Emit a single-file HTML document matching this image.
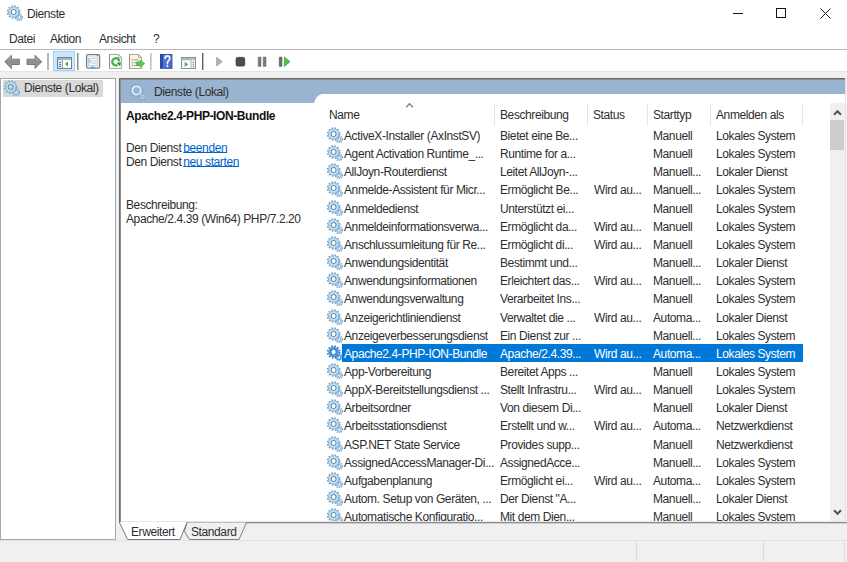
<!DOCTYPE html>
<html><head><meta charset="utf-8">
<style>
*{margin:0;padding:0;box-sizing:border-box}
html,body{width:847px;height:562px;overflow:hidden;background:#fff}
body{position:relative;font-family:"Liberation Sans",sans-serif;font-size:12px;color:#2e2e2e;letter-spacing:-0.4px}
.a{position:absolute;white-space:nowrap}
.t{position:absolute;white-space:nowrap;line-height:14px}
.r{position:absolute;left:0;width:847px;height:18px;line-height:18px;white-space:nowrap}
.r div{position:absolute;top:1px}
.r svg{position:absolute;left:327px;top:1px}
.sel{color:#fff}
</style></head><body>
<svg width="0" height="0" style="position:absolute">
<defs>
<symbol id="gear" viewBox="0 0 16 16">
<circle cx="12" cy="12.3" r="3.2" fill="none" stroke="#6e95bd" stroke-width="1.6" stroke-dasharray="1.05 1.0"/>
<circle cx="12" cy="12.3" r="2.0" fill="#dce9f3" stroke="#a3c6e0" stroke-width="1.5"/>
<circle cx="6.6" cy="7" r="5.95" fill="none" stroke="#77a2cb" stroke-width="1.8" stroke-dasharray="1.55 1.57"/>
<circle cx="6.6" cy="7" r="4.0" fill="none" stroke="#bde3f6" stroke-width="2.9"/>
<circle cx="6.6" cy="7" r="5.2" fill="none" stroke="#86b1d7" stroke-width="0.9"/>
<circle cx="6.6" cy="7" r="2.55" fill="none" stroke="#587b9c" stroke-width="1.0"/>
</symbol>
<symbol id="gearsel" viewBox="0 0 16 16">
<circle cx="11.9" cy="12.2" r="3.1" fill="none" stroke="#2f7fd0" stroke-width="1.5" stroke-dasharray="1.05 1.0"/>
<circle cx="11.9" cy="12.2" r="2.0" fill="none" stroke="#5aa0e0" stroke-width="1.6"/>
<circle cx="6.6" cy="7" r="6.0" fill="none" stroke="#2b7fd3" stroke-width="1.7" stroke-dasharray="1.55 1.59"/>
<circle cx="6.6" cy="7" r="4.0" fill="none" stroke="#4a98e0" stroke-width="2.8"/>
<circle cx="6.6" cy="7" r="2.6" fill="#fff" stroke="#1f6fc0" stroke-width="0.9"/>
</symbol>
</defs>
</svg>

<!-- title bar -->
<svg class="a" style="left:7px;top:5px" width="16" height="16"><use href="#gear"/></svg>
<div class="t" style="left:27px;top:7px">Dienste</div>
<div class="a" style="left:733px;top:13px;width:10px;height:1px;background:#111"></div>
<div class="a" style="left:776px;top:8px;width:10px;height:10px;border:1px solid #111"></div>
<svg class="a" style="left:820px;top:8px" width="11" height="11"><path d="M0.5 0.5L10.5 10.5M10.5 0.5L0.5 10.5" stroke="#222" stroke-width="1"/></svg>

<!-- menu -->
<div class="t" style="left:9px;top:32px">Datei</div>
<div class="t" style="left:50px;top:32px">Aktion</div>
<div class="t" style="left:99px;top:32px">Ansicht</div>
<div class="t" style="left:153px;top:32px">?</div>
<div class="a" style="left:0;top:49px;width:847px;height:1px;background:#b9b9b9"></div>

<!-- toolbar -->
<div class="a" style="left:0;top:71px;width:847px;height:1px;background:#e3e3e3"></div>
<div class="a" style="left:0;top:72px;width:847px;height:490px;background:#f0f0f0"></div>

<svg class="a" style="left:0;top:50px" width="300" height="21">
<defs>
<linearGradient id="arr" x1="0" y1="0" x2="0" y2="1"><stop offset="0" stop-color="#b4b4b4"/><stop offset="0.5" stop-color="#8c8c8c"/><stop offset="1" stop-color="#a8a8a8"/></linearGradient>
<linearGradient id="hlp2" x1="0" y1="0" x2="1" y2="1"><stop offset="0" stop-color="#5b80dc"/><stop offset="1" stop-color="#3f62c8"/></linearGradient>
<linearGradient id="hlp" x1="0" y1="0" x2="1" y2="0"><stop offset="0" stop-color="#2a44a0"/><stop offset="0.35" stop-color="#3555b8"/><stop offset="0.4" stop-color="#5b80d8"/><stop offset="1" stop-color="#4a6fd0"/></linearGradient>
</defs>
<!-- back -->
<path d="M4.8 11.7 L11.4 5.3 L11.4 9.2 L19.3 9.2 L19.3 14.5 L11.4 14.5 L11.4 18.5 Z" fill="url(#arr)" stroke="#6e6e6e" stroke-width="0.9" stroke-linejoin="round"/>
<!-- forward -->
<path d="M41.7 11.7 L35 5.3 L35 9.2 L27 9.2 L27 14.5 L35 14.5 L35 18.5 Z" fill="url(#arr)" stroke="#6e6e6e" stroke-width="0.9" stroke-linejoin="round"/>
<rect x="47" y="3" width="2" height="17" fill="#b8b8b8"/>
<!-- highlighted button -->
<rect x="53.5" y="1.5" width="21" height="19" fill="#cce8ff" stroke="#99d1ff" stroke-width="1"/>
<rect x="57.5" y="7.5" width="14" height="11" fill="#fff" stroke="#7a7f85" stroke-width="1"/>
<rect x="58" y="8" width="13" height="2" fill="#a9b2bb"/>
<rect x="58" y="10" width="4" height="8" fill="#dde6ef"/>
<rect x="62" y="10" width="1" height="8" fill="#9aa4ae"/>
<rect x="59" y="12" width="2" height="1" fill="#4d7fc0"/><rect x="59" y="14" width="2" height="1" fill="#4d7fc0"/><rect x="59" y="16" width="2" height="1" fill="#4d7fc0"/>
<path d="M65 14 L68 11.5 L68 16.5 Z" fill="#3fae3a"/>
<rect x="77" y="3" width="1.5" height="17" fill="#8a8a8a"/>
<!-- properties -->
<rect x="86.6" y="4.6" width="13" height="13.6" rx="1.4" fill="#fbfcfd" stroke="#7c7c7c" stroke-width="1.3"/>
<rect x="87.5" y="5.5" width="11.2" height="1.4" fill="#e3e6ea"/>
<rect x="96.8" y="5" width="1.3" height="1.2" fill="#6a7a90"/>
<rect x="88.3" y="8.2" width="9" height="7.6" fill="#f4f6f8" stroke="#b4bcc8" stroke-width="0.7"/>
<rect x="88.8" y="9.4" width="2.1" height="3.6" fill="#8fdcf8"/>
<rect x="91.8" y="10.6" width="4.6" height="0.9" fill="#c8ccd2"/>
<rect x="91.8" y="12.8" width="4.6" height="0.9" fill="#c8ccd2"/>
<rect x="90.9" y="16.6" width="3.5" height="1.5" rx="0.7" fill="#22b5ef"/>
<!-- refresh doc -->
<path d="M109.5 4.5 L118.6 4.5 L121.6 7.6 L121.6 18.5 L109.5 18.5 Z" fill="#fdfdfd" stroke="#a8a8a8" stroke-width="1"/>
<path d="M109.5 4.5 L109.5 18.5" stroke="#8c8c8c" stroke-width="1"/>
<path d="M118.6 4.5 L118.6 7.6 L121.6 7.6" fill="none" stroke="#a0a0a0" stroke-width="0.8"/>
<path d="M117.6 14.9 A3.6 3.6 0 1 1 119.4 11.3" fill="none" stroke="#3cb83c" stroke-width="2.3"/>
<path d="M116.6 12.8 L120.9 12.2 L120.2 16.6 Z" fill="#1f9e1f"/>
<!-- export doc -->
<path d="M129.5 4.5 L138.6 4.5 L141.6 7.6 L141.6 18.5 L129.5 18.5 Z" fill="#fbf5da" stroke="#a9a99a" stroke-width="1"/>
<path d="M129.5 4.5 L129.5 18.5" stroke="#8e8e80" stroke-width="1"/>
<path d="M138.6 4.5 L138.6 7.6 L141.6 7.6" fill="none" stroke="#a0a090" stroke-width="0.8"/>
<rect x="131.8" y="9.3" width="1.3" height="1.1" fill="#8a8a8a"/><rect x="133.8" y="9.3" width="4.9" height="1.1" fill="#a4a6b8"/>
<rect x="131.8" y="12.1" width="1.3" height="1.1" fill="#8a8a8a"/><rect x="133.8" y="12.1" width="4.9" height="1.1" fill="#a4a6b8"/>
<rect x="131.8" y="14.9" width="1.3" height="1.1" fill="#8a8a8a"/><rect x="133.8" y="14.9" width="4.9" height="1.1" fill="#a4a6b8"/>
<path d="M136.7 11.9 L140.2 11.9 L140.2 10.2 L144.7 13.65 L140.2 17.1 L140.2 15.4 L136.7 15.4 Z" fill="#55cc55" stroke="#35a835" stroke-width="0.7" stroke-linejoin="round"/>
<rect x="150" y="3" width="1.6" height="17" fill="#c4c4c4"/>
<!-- help -->
<rect x="160" y="4" width="12.4" height="14.8" fill="#2f48a8"/>
<rect x="163" y="4.8" width="8.8" height="13.2" fill="url(#hlp2)"/>
<path d="M165 8.2 Q165.6 5.9 167.5 5.9 Q169.9 6 169.8 8.4 Q169.7 10 168.2 11.2 Q167.4 11.9 167.4 13.6" fill="none" stroke="#f4f6fb" stroke-width="1.7" stroke-linecap="round"/>
<circle cx="167.4" cy="16" r="1.05" fill="#f4f6fb"/>
<!-- window play -->
<rect x="181.5" y="7.5" width="14" height="11" fill="#fff" stroke="#8d9197" stroke-width="1"/>
<rect x="182" y="8" width="13" height="2.4" fill="#b9c1ca"/>
<rect x="182.5" y="8.7" width="8" height="0.7" fill="#9aa4ae"/>
<rect x="190.6" y="10.4" width="1.1" height="7.6" fill="#a3abb4"/>
<rect x="191.7" y="10.4" width="3.3" height="7.6" fill="#eef1f4"/>
<path d="M184.7 11.8 L188.2 14.3 L184.7 16.9 Z" fill="#3dbb3d"/>
<circle cx="193.4" cy="12.4" r="0.6" fill="#4a86d0"/><circle cx="193.4" cy="14.4" r="0.6" fill="#4a86d0"/><circle cx="193.4" cy="16.4" r="0.6" fill="#4a86d0"/>
<rect x="202" y="3" width="1.4" height="17" fill="#606060"/>
<!-- play disabled -->
<path d="M216.6 7.2 L222.4 11.6 L216.6 16 Z" fill="#b2b2b2" stroke="#a4a4a4" stroke-width="0.8" stroke-linejoin="round"/>
<!-- stop -->
<rect x="236.1" y="7.4" width="8.6" height="8.6" rx="1.5" fill="#4d4d4d" stroke="#353535" stroke-width="0.8"/>
<!-- pause -->
<rect x="258.2" y="7" width="2.8" height="9.5" rx="0.6" fill="#7c7c7c" stroke="#5e5e5e" stroke-width="0.5"/>
<rect x="263.2" y="7" width="2.8" height="9.5" rx="0.6" fill="#7c7c7c" stroke="#5e5e5e" stroke-width="0.5"/>
<!-- restart -->
<rect x="279.2" y="7" width="2.8" height="9.5" rx="0.6" fill="#6e6e6e" stroke="#555" stroke-width="0.5"/>
<path d="M284.4 7 L290 11.7 L284.4 16.4 Z" fill="#4cc44c" stroke="#34a834" stroke-width="0.8" stroke-linejoin="round"/>
</svg>

<div class="a" style="left:0;top:78px;width:116px;height:462px;background:#fff;border:1px solid #a3a7ae"></div>
<div class="a" style="left:3px;top:80px;width:100px;height:17px;background:#d9d9d9"></div>
<svg class="a" style="left:4px;top:80px" width="16" height="16"><use href="#gear"/></svg>
<div class="t" style="left:24px;top:81px">Dienste (Lokal)</div>

<div class="a" style="left:119px;top:78px;width:726px;height:445px;background:#fff;border-left:1px solid #696969;border-top:1px solid #696969;box-shadow:inset 1px 1px 0 #8d8d8d"></div>
<div class="a" style="left:121px;top:80px;width:724px;height:23px;background:#99b4d1"></div>
<svg class="a" style="left:126px;top:82px" width="24" height="22">
<circle cx="10.6" cy="8.4" r="6.1" fill="none" stroke="#7d95b2" stroke-width="1.3" stroke-dasharray="1.3 1.9" opacity=".8"/>
<circle cx="10.6" cy="8.4" r="4.0" fill="none" stroke="#d4f1fb" stroke-width="2.0"/>
<circle cx="10.6" cy="8.4" r="2.9" fill="none" stroke="#8ea4bf" stroke-width="0.6"/>
<circle cx="16.6" cy="14.5" r="2.9" fill="none" stroke="#7f97b3" stroke-width="1.2" stroke-dasharray="0.9 1.1" opacity=".8"/>
<circle cx="16.6" cy="14.5" r="1.8" fill="none" stroke="#b9cfe0" stroke-width="1.3"/>
</svg>
<div class="t" style="left:154px;top:85px">Dienste (Lokal)</div>
<svg class="a" style="left:306px;top:94px" width="541" height="10"><path d="M0 9.5 L8 9.5 Q10 1 16 0 L541 0 L541 10 L0 10 Z" fill="#fff"/></svg>
<div class="a" style="left:845px;top:78px;width:1px;height:445px;background:#e3e3e3"></div>

<div class="t" style="left:126px;top:109px;font-weight:bold;color:#111">Apache2.4-PHP-ION-Bundle</div>
<div class="t" style="left:126px;top:141px">Den Dienst <span style="color:#0066cc;text-decoration:underline;text-underline-offset:0px;margin-left:-1px">beenden</span></div>
<div class="t" style="left:126px;top:155px">Den Dienst <span style="color:#0066cc;text-decoration:underline;text-underline-offset:0px;margin-left:-1px">neu starten</span></div>
<div class="t" style="left:126px;top:198px">Beschreibung:</div>
<div class="t" style="left:126px;top:212px">Apache/2.4.39 (Win64) PHP/7.2.20</div>

<div class="a" style="left:494px;top:103px;width:1px;height:23px;background:#e5e5e5"></div>
<div class="a" style="left:587px;top:103px;width:1px;height:23px;background:#e5e5e5"></div>
<div class="a" style="left:647px;top:103px;width:1px;height:23px;background:#e5e5e5"></div>
<div class="a" style="left:710px;top:103px;width:1px;height:23px;background:#e5e5e5"></div>
<div class="a" style="left:802px;top:103px;width:1px;height:23px;background:#e5e5e5"></div>
<svg class="a" style="left:405px;top:102px" width="10" height="7"><path d="M1.2 5.4 L4.5 1.6 L7.9 5.2" fill="none" stroke="#7a7a7a" stroke-width="1.3"/></svg>
<div class="t" style="left:329px;top:108px">Name</div>
<div class="t" style="left:500px;top:108px">Beschreibung</div>
<div class="t" style="left:593px;top:108px">Status</div>
<div class="t" style="left:653px;top:108px">Starttyp</div>
<div class="t" style="left:716px;top:108px">Anmelden als</div>
<div class="a" style="left:0;top:126px;width:830px;height:395px;overflow:hidden">
<div class="r" style="top:0.00px">
<svg width="16" height="16"><use href="#gear"/></svg>
<div style="left:344px">ActiveX-Installer (AxInstSV)</div>
<div style="left:500px">Bietet eine Be...</div>
<div style="left:653px">Manuell</div>
<div style="left:716px">Lokales System</div>
</div>
<div class="r" style="top:18.15px">
<svg width="16" height="16"><use href="#gear"/></svg>
<div style="left:344px">Agent Activation Runtime_...</div>
<div style="left:500px">Runtime for a...</div>
<div style="left:653px">Manuell</div>
<div style="left:716px">Lokales System</div>
</div>
<div class="r" style="top:36.30px">
<svg width="16" height="16"><use href="#gear"/></svg>
<div style="left:344px">AllJoyn-Routerdienst</div>
<div style="left:500px">Leitet AllJoyn-...</div>
<div style="left:653px">Manuell...</div>
<div style="left:716px">Lokaler Dienst</div>
</div>
<div class="r" style="top:54.45px">
<svg width="16" height="16"><use href="#gear"/></svg>
<div style="left:344px">Anmelde-Assistent für Micr...</div>
<div style="left:500px">Ermöglicht Be...</div>
<div style="left:594px">Wird au...</div>
<div style="left:653px">Manuell...</div>
<div style="left:716px">Lokales System</div>
</div>
<div class="r" style="top:72.60px">
<svg width="16" height="16"><use href="#gear"/></svg>
<div style="left:344px">Anmeldedienst</div>
<div style="left:500px">Unterstützt ei...</div>
<div style="left:653px">Manuell</div>
<div style="left:716px">Lokales System</div>
</div>
<div class="r" style="top:90.75px">
<svg width="16" height="16"><use href="#gear"/></svg>
<div style="left:344px">Anmeldeinformationsverwa...</div>
<div style="left:500px">Ermöglicht da...</div>
<div style="left:594px">Wird au...</div>
<div style="left:653px">Manuell</div>
<div style="left:716px">Lokales System</div>
</div>
<div class="r" style="top:108.90px">
<svg width="16" height="16"><use href="#gear"/></svg>
<div style="left:344px">Anschlussumleitung für Re...</div>
<div style="left:500px">Ermöglicht di...</div>
<div style="left:594px">Wird au...</div>
<div style="left:653px">Manuell</div>
<div style="left:716px">Lokales System</div>
</div>
<div class="r" style="top:127.05px">
<svg width="16" height="16"><use href="#gear"/></svg>
<div style="left:344px">Anwendungsidentität</div>
<div style="left:500px">Bestimmt und...</div>
<div style="left:653px">Manuell...</div>
<div style="left:716px">Lokaler Dienst</div>
</div>
<div class="r" style="top:145.20px">
<svg width="16" height="16"><use href="#gear"/></svg>
<div style="left:344px">Anwendungsinformationen</div>
<div style="left:500px">Erleichtert das...</div>
<div style="left:594px">Wird au...</div>
<div style="left:653px">Manuell...</div>
<div style="left:716px">Lokales System</div>
</div>
<div class="r" style="top:163.35px">
<svg width="16" height="16"><use href="#gear"/></svg>
<div style="left:344px">Anwendungsverwaltung</div>
<div style="left:500px">Verarbeitet Ins...</div>
<div style="left:653px">Manuell</div>
<div style="left:716px">Lokales System</div>
</div>
<div class="r" style="top:181.50px">
<svg width="16" height="16"><use href="#gear"/></svg>
<div style="left:344px">Anzeigerichtliniendienst</div>
<div style="left:500px">Verwaltet die ...</div>
<div style="left:594px">Wird au...</div>
<div style="left:653px">Automa...</div>
<div style="left:716px">Lokaler Dienst</div>
</div>
<div class="r" style="top:199.65px">
<svg width="16" height="16"><use href="#gear"/></svg>
<div style="left:344px">Anzeigeverbesserungsdienst</div>
<div style="left:500px">Ein Dienst zur ...</div>
<div style="left:653px">Manuell...</div>
<div style="left:716px">Lokales System</div>
</div>
<div class="r sel" style="top:217.80px">
<div style="left:342px;top:0;width:461px;height:18px;background:#0078d7"></div>
<svg width="16" height="16"><use href="#gearsel"/></svg>
<div style="left:344px">Apache2.4-PHP-ION-Bundle</div>
<div style="left:500px">Apache/2.4.39...</div>
<div style="left:594px">Wird au...</div>
<div style="left:653px">Automa...</div>
<div style="left:716px">Lokales System</div>
</div>
<div class="r" style="top:235.95px">
<svg width="16" height="16"><use href="#gear"/></svg>
<div style="left:344px">App-Vorbereitung</div>
<div style="left:500px">Bereitet Apps ...</div>
<div style="left:653px">Manuell</div>
<div style="left:716px">Lokales System</div>
</div>
<div class="r" style="top:254.10px">
<svg width="16" height="16"><use href="#gear"/></svg>
<div style="left:344px">AppX-Bereitstellungsdienst ...</div>
<div style="left:500px">Stellt Infrastru...</div>
<div style="left:594px">Wird au...</div>
<div style="left:653px">Manuell</div>
<div style="left:716px">Lokales System</div>
</div>
<div class="r" style="top:272.25px">
<svg width="16" height="16"><use href="#gear"/></svg>
<div style="left:344px">Arbeitsordner</div>
<div style="left:500px">Von diesem Di...</div>
<div style="left:653px">Manuell</div>
<div style="left:716px">Lokaler Dienst</div>
</div>
<div class="r" style="top:290.40px">
<svg width="16" height="16"><use href="#gear"/></svg>
<div style="left:344px">Arbeitsstationsdienst</div>
<div style="left:500px">Erstellt und w...</div>
<div style="left:594px">Wird au...</div>
<div style="left:653px">Automa...</div>
<div style="left:716px">Netzwerkdienst</div>
</div>
<div class="r" style="top:308.55px">
<svg width="16" height="16"><use href="#gear"/></svg>
<div style="left:344px">ASP.NET State Service</div>
<div style="left:500px">Provides supp...</div>
<div style="left:653px">Manuell</div>
<div style="left:716px">Netzwerkdienst</div>
</div>
<div class="r" style="top:326.70px">
<svg width="16" height="16"><use href="#gear"/></svg>
<div style="left:344px">AssignedAccessManager-Di...</div>
<div style="left:500px">AssignedAcce...</div>
<div style="left:653px">Manuell...</div>
<div style="left:716px">Lokales System</div>
</div>
<div class="r" style="top:344.85px">
<svg width="16" height="16"><use href="#gear"/></svg>
<div style="left:344px">Aufgabenplanung</div>
<div style="left:500px">Ermöglicht ei...</div>
<div style="left:594px">Wird au...</div>
<div style="left:653px">Automa...</div>
<div style="left:716px">Lokales System</div>
</div>
<div class="r" style="top:363.00px">
<svg width="16" height="16"><use href="#gear"/></svg>
<div style="left:344px">Autom. Setup von Geräten, ...</div>
<div style="left:500px">Der Dienst &quot;A...</div>
<div style="left:653px">Manuell...</div>
<div style="left:716px">Lokaler Dienst</div>
</div>
<div class="r" style="top:381.15px">
<svg width="16" height="16"><use href="#gear"/></svg>
<div style="left:344px">Automatische Konfiguratio...</div>
<div style="left:500px">Mit dem Dien...</div>
<div style="left:653px">Manuell</div>
<div style="left:716px">Lokales System</div>
</div>
</div>
<div class="a" style="left:830px;top:103px;width:15px;height:418px;background:#f0f0f0"></div>
<div class="a" style="left:830px;top:120px;width:14px;height:30px;background:#cdcdcd"></div>
<svg class="a" style="left:833px;top:109px" width="9" height="7"><path d="M1 5.8 L4.5 2.2 L8 5.8" fill="none" stroke="#555" stroke-width="2"/></svg>
<svg class="a" style="left:833px;top:509px" width="9" height="7"><path d="M1 1.2 L4.5 4.8 L8 1.2" fill="none" stroke="#555" stroke-width="2"/></svg>

<div class="a" style="left:121px;top:521px;width:724px;height:1px;background:#e6e6e6"></div>
<div class="a" style="left:121px;top:522px;width:726px;height:18px;background:#f0f0f0"></div>
<div class="a" style="left:186px;top:522px;width:661px;height:1px;background:#8f8f8f"></div>
<div class="a" style="left:186px;top:523px;width:661px;height:1px;background:#cdcdcd"></div>
<svg class="a" style="left:118px;top:520px" width="140" height="22">
<path d="M69 2.5 L66.5 11.5 L71.5 19.5 L121 19.5 L128.5 2.5" fill="#f0f0f0" stroke="#808080" stroke-width="1" stroke-linejoin="round"/>
<path d="M1.2 2 L9.6 19.5 L62 19.5 L69.2 2 Z" fill="#fff"/>
<path d="M1.2 2 L9.6 19.5 L62 19.5 L69.2 2" fill="none" stroke="#7a7a7a" stroke-width="1"/>
</svg>
<div class="t" style="left:131px;top:525px">Erweitert</div>
<div class="t" style="left:191px;top:525px">Standard</div>

<div class="a" style="left:0;top:540px;width:847px;height:1px;background:#e2e2e2"></div>
<div class="a" style="left:636px;top:542px;width:1px;height:19px;background:#d9d9d9"></div>
<div class="a" style="left:763px;top:542px;width:1px;height:19px;background:#d9d9d9"></div>
<div class="a" style="left:844px;top:542px;width:1px;height:19px;background:#d9d9d9"></div>

</body></html>
